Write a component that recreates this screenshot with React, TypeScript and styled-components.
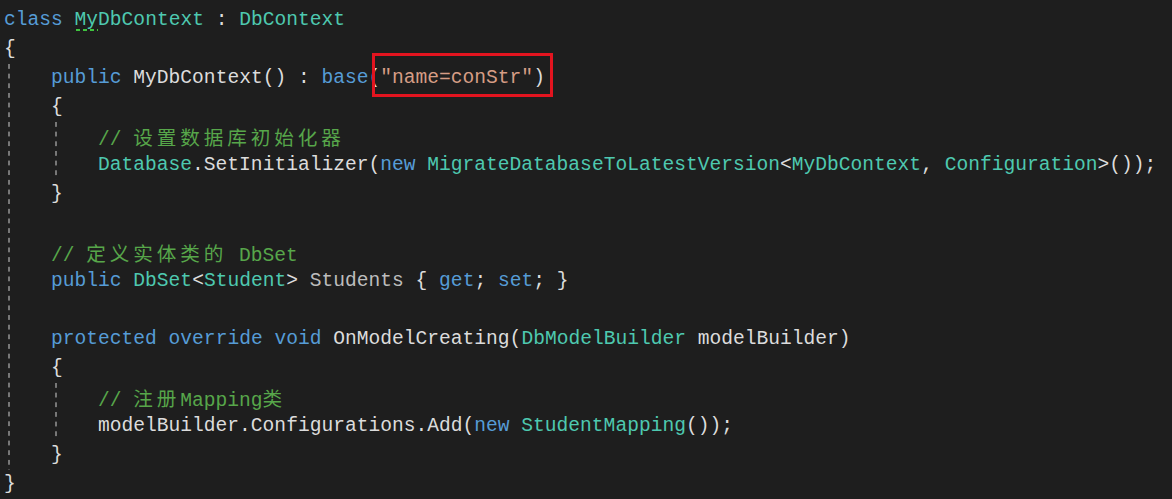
import React from 'react';
import styled, { createGlobalStyle } from 'styled-components';

type Kind = 'kw' | 'type' | 'str' | 'com' | 'plain' | 'prop';

const colors: Record<Kind, string> = {
  kw: '#569cd6',
  type: '#4ec9b0',
  str: '#d69d85',
  com: '#57a64a',
  plain: '#dcdcdc',
  prop: '#bdbdbd',
};

const INDENT = 47;

const Global = createGlobalStyle`
  html, body {
    margin: 0;
    background: #1e1e1e;
  }
`;

const Editor = styled.div`
  width: 1172px;
  height: 499px;
  box-sizing: border-box;
  padding: 5.5px 0 0 4px;
  background: #1e1e1e;
  font-family: "Liberation Mono", "Noto Sans CJK SC", monospace;
  font-size: 19.6px;
  color: ${colors.plain};
  overflow: hidden;
`;

const Line = styled.div<{ $depth?: number }>`
  height: 29px;
  line-height: 29px;
  white-space: pre;
  padding-left: ${(p) => (p.$depth || 0) * INDENT}px;
`;

// block between braces, draws the dashed indent guide
const Body = styled.div<{ $guide: number }>`
  background-image: linear-gradient(to bottom, #777 0 5px, transparent 5px);
  background-size: 2px 9.667px;
  background-repeat: repeat-y;
  background-position: ${(p) => p.$guide}px 0;
`;

const T = styled.span<{ $k: Kind }>`
  color: ${(p) => colors[p.$k]};
`;

const Cjk = styled.span`
  font-family: "Noto Sans CJK SC", sans-serif;
  letter-spacing: 3.9px;
`;

const Squiggle = styled.span`
  background-image: linear-gradient(to right, #3fc43f 0 4px, transparent 4px);
  background-size: 7px 2px;
  background-repeat: repeat-x;
  background-position: 1px 100%;
`;

const Marked = styled.span`
  position: relative;
  &::after {
    content: '';
    position: absolute;
    left: 3px;
    right: -8px;
    top: -14px;
    bottom: -8px;
    border: 3px solid #e3141f;
  }
`;

export default function App() {
  return (
    <>
      <Global />
      <Editor>
        <Line>
          <T $k="kw">class</T> <T $k="type"><Squiggle>My</Squiggle>DbContext</T> : <T $k="type">DbContext</T>
        </Line>
        <Line>{'{'}</Line>
        <Body $guide={4}>
          <Line $depth={1}>
            <T $k="kw">public</T> MyDbContext() : <T $k="kw">base</T>
            <Marked>(<T $k="str">"name=conStr"</T>)</Marked>
          </Line>
          <Line $depth={1}>{'{'}</Line>
          <Body $guide={INDENT + 4}>
            <Line $depth={2}>
              <T $k="com">// <Cjk>设置数据库初始化器</Cjk></T>
            </Line>
            <Line $depth={2}>
              <T $k="type">Database</T>.SetInitializer(<T $k="kw">new</T> <T $k="type">MigrateDatabaseToLatestVersion</T>
              {'<'}<T $k="type">MyDbContext</T>, <T $k="type">Configuration</T>{'>'}());
            </Line>
          </Body>
          <Line $depth={1}>{'}'}</Line>
          <Line $depth={1}> </Line>
          <Line $depth={1}>
            <T $k="com">// <Cjk>定义实体类的</Cjk> DbSet</T>
          </Line>
          <Line $depth={1}>
            <T $k="kw">public</T> <T $k="type">DbSet</T>{'<'}<T $k="type">Student</T>{'>'} <T $k="prop">Students</T> {'{ '}
            <T $k="kw">get</T>; <T $k="kw">set</T>; {'}'}
          </Line>
          <Line $depth={1}> </Line>
          <Line $depth={1}>
            <T $k="kw">protected</T> <T $k="kw">override</T> <T $k="kw">void</T> OnModelCreating(<T $k="type">DbModelBuilder</T> modelBuilder)
          </Line>
          <Line $depth={1}>{'{'}</Line>
          <Body $guide={INDENT + 4}>
            <Line $depth={2}>
              <T $k="com">// <Cjk>注册</Cjk>Mapping<Cjk>类</Cjk></T>
            </Line>
            <Line $depth={2}>
              modelBuilder.Configurations.Add(<T $k="kw">new</T> <T $k="type">StudentMapping</T>());
            </Line>
          </Body>
          <Line $depth={1}>{'}'}</Line>
        </Body>
        <Line>{'}'}</Line>
      </Editor>
    </>
  );
}
